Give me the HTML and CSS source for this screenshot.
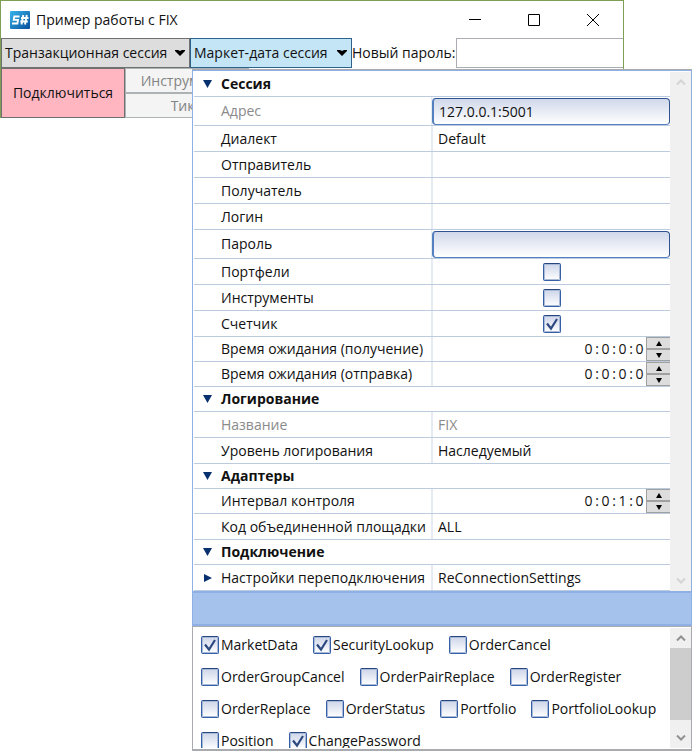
FILE: index.html
```html
<!DOCTYPE html>
<html lang="ru">
<head>
<meta charset="utf-8">
<title>Пример работы с FIX</title>
<link rel="stylesheet" href="styles.css">
</head>
<body>
<main class="window">
  <header class="titlebar">
    <svg class="logo" viewBox="0 0 20 18" aria-hidden="true">
      <defs><linearGradient id="lg" x1="0" y1="0" x2="1" y2="1"><stop offset="0" stop-color="#35b4ea"/><stop offset="1" stop-color="#0a4f9c"/></linearGradient></defs>
      <rect width="20" height="18" rx="1" fill="url(#lg)"/>
      <path d="M9.500 5.500H4.300L3.700 8.900H8L7.400 12.500H2M13.300 4L11.500 13.500M16.800 4L15 13.500M11 7H18.500M10.300 10.500H17.800" fill="none" stroke="#fff" stroke-width="1.900"/>
    </svg>
    <h1 class="title">Пример работы с FIX</h1>
    <div class="caption">
      <button class="cap" aria-label="Свернуть"><svg viewBox="0 0 12 12"><path d="M0 5.500H12"/></svg></button>
      <button class="cap" aria-label="Развернуть"><svg viewBox="0 0 12 12"><path d="M.5.500H11.500V11.500H.500Z"/></svg></button>
      <button class="cap" aria-label="Закрыть"><svg viewBox="0 0 12 12"><path d="M0 0L12 12M12 0L0 12"/></svg></button>
    </div>
  </header>
  <div class="toolbar">
    <button class="drop">Транзакционная сессия<svg class="chev" viewBox="0 0 10 6"><path d="M0 0H3L5 1L7 0H10V1L5 6L0 1Z"/></svg></button>
    <button class="drop drop-open" aria-expanded="true">Маркет-дата сессия<svg class="chev" viewBox="0 0 10 6"><path d="M0 0H3L5 1L7 0H10V1L5 6L0 1Z"/></svg></button>
    <label for="newpass">Новый пароль:</label>
    <input class="newpass" id="newpass" type="password">
  </div>
  <div class="actions">
    <button class="connect">Подключиться</button>
    <div class="stack">
      <button class="off" disabled>Инструменты</button>
      <button class="off" disabled>Тики</button>
    </div>
  </div>
</main>

<section class="popup" aria-label="Маркет-дата сессия">
  <div class="props">
    <div class="grid">
      <button class="group"><svg class="tri" viewBox="0 0 9 8"><path d="M0 0H9L4.500 8Z"/></svg>Сессия</button>
      <div class="row row-box"><label class="name muted" for="addr">Адрес</label><div class="value"><input class="box" id="addr" value="127.0.0.1:5001"></div></div>
      <div class="row"><label class="name" for="dialect">Диалект</label><div class="value"><select class="pick" id="dialect"><option>Default</option></select></div></div>
      <div class="row"><label class="name" for="sender">Отправитель</label><div class="value"><input class="plain" id="sender"></div></div>
      <div class="row"><label class="name" for="target">Получатель</label><div class="value"><input class="plain" id="target"></div></div>
      <div class="row"><label class="name" for="login">Логин</label><div class="value"><input class="plain" id="login"></div></div>
      <div class="row row-box"><label class="name" for="pass">Пароль</label><div class="value"><input class="box" id="pass" type="password"></div></div>
      <div class="row"><label class="name" for="portf">Портфели</label><div class="value center"><input class="check" id="portf" type="checkbox"></div></div>
      <div class="row"><label class="name" for="instr">Инструменты</label><div class="value center"><input class="check" id="instr" type="checkbox"></div></div>
      <div class="row"><label class="name" for="counter">Счетчик</label><div class="value center"><input class="check" id="counter" type="checkbox" checked></div></div>
      <div class="row row-short"><label class="name" for="recv">Время ожидания (получение)</label><div class="value time"><input class="digit" id="recv" value="0"><span class="colon">:</span><input class="digit" aria-label="часы" value="0"><span class="colon">:</span><input class="digit" aria-label="минуты" value="0"><span class="colon">:</span><input class="digit" aria-label="секунды" value="0"><div class="spin"><button aria-label="Больше"><svg viewBox="0 0 6 5"><path d="M0 5H6L3 0Z"/></svg></button><button aria-label="Меньше"><svg viewBox="0 0 6 5"><path d="M0 0H6L3 5Z"/></svg></button></div></div></div>
      <div class="row row-short"><label class="name" for="send">Время ожидания (отправка)</label><div class="value time"><input class="digit" id="send" value="0"><span class="colon">:</span><input class="digit" aria-label="часы" value="0"><span class="colon">:</span><input class="digit" aria-label="минуты" value="0"><span class="colon">:</span><input class="digit" aria-label="секунды" value="0"><div class="spin"><button aria-label="Больше"><svg viewBox="0 0 6 5"><path d="M0 5H6L3 0Z"/></svg></button><button aria-label="Меньше"><svg viewBox="0 0 6 5"><path d="M0 0H6L3 5Z"/></svg></button></div></div></div>
      <button class="group"><svg class="tri" viewBox="0 0 9 8"><path d="M0 0H9L4.500 8Z"/></svg>Логирование</button>
      <div class="row"><label class="name muted" for="title">Название</label><div class="value"><input class="plain muted" id="title" value="FIX" readonly></div></div>
      <div class="row"><label class="name" for="level">Уровень логирования</label><div class="value"><select class="pick" id="level"><option>Наследуемый</option></select></div></div>
      <button class="group"><svg class="tri" viewBox="0 0 9 8"><path d="M0 0H9L4.500 8Z"/></svg>Адаптеры</button>
      <div class="row row-short"><label class="name" for="interval">Интервал контроля</label><div class="value time"><input class="digit" id="interval" value="0"><span class="colon">:</span><input class="digit" aria-label="часы" value="0"><span class="colon">:</span><input class="digit" aria-label="минуты" value="1"><span class="colon">:</span><input class="digit" aria-label="секунды" value="0"><div class="spin"><button aria-label="Больше"><svg viewBox="0 0 6 5"><path d="M0 5H6L3 0Z"/></svg></button><button aria-label="Меньше"><svg viewBox="0 0 6 5"><path d="M0 0H6L3 5Z"/></svg></button></div></div></div>
      <div class="row"><label class="name" for="board">Код объединенной площадки</label><div class="value"><input class="plain" id="board" value="ALL"></div></div>
      <button class="group"><svg class="tri" viewBox="0 0 9 8"><path d="M0 0H9L4.500 8Z"/></svg>Подключение</button>
      <div class="row"><label class="name name-tree" for="reconn"><svg class="tri" viewBox="0 0 9 8"><path d="M1 0V8L9 4Z"/></svg>Настройки переподключения</label><div class="value"><input class="plain" id="reconn" value="ReConnectionSettings" readonly></div></div>
    </div>
    <div class="scroll scroll-off">
      <button aria-label="Вверх" disabled><svg viewBox="0 0 10 6"><path d="M1 5.500L5 1.500L9 5.500"/></svg></button>
      <button aria-label="Вниз" disabled><svg viewBox="0 0 10 6"><path d="M1 .5L5 4.500L9 .5"/></svg></button>
    </div>
  </div>
  <div class="band"></div>
  <div class="messages">
    <div class="choices">
      <label class="choice"><input class="check" type="checkbox" checked>MarketData</label>
      <label class="choice"><input class="check" type="checkbox" checked>SecurityLookup</label>
      <label class="choice"><input class="check" type="checkbox">OrderCancel</label>
      <label class="choice"><input class="check" type="checkbox">OrderGroupCancel</label>
      <label class="choice"><input class="check" type="checkbox">OrderPairReplace</label>
      <label class="choice"><input class="check" type="checkbox">OrderRegister</label>
      <label class="choice"><input class="check" type="checkbox">OrderReplace</label>
      <label class="choice"><input class="check" type="checkbox">OrderStatus</label>
      <label class="choice"><input class="check" type="checkbox">Portfolio</label>
      <label class="choice"><input class="check" type="checkbox">PortfolioLookup</label>
      <label class="choice"><input class="check" type="checkbox">Position</label>
      <label class="choice"><input class="check" type="checkbox" checked>ChangePassword</label>
    </div>
    <div class="scroll">
      <button aria-label="Вверх"><svg viewBox="0 0 10 6"><path d="M1 5.500L5 1.500L9 5.500"/></svg></button>
      <div class="thumb"></div>
      <button aria-label="Вниз"><svg viewBox="0 0 10 6"><path d="M1 .5L5 4.500L9 .5"/></svg></button>
    </div>
  </div>
</section>
</body>
</html>
```
FILE: styles.css
```css
* { box-sizing: border-box; }

body {
  margin: 0;
  background: #fff;
  color: #111;
  font-family: "Open Sans", "Noto Sans", sans-serif;
  font-size: 14px;
  line-height: 20px;
}

button, input, select {
  margin: 0;
  padding: 0;
  font: inherit;
  color: inherit;
  border-radius: 0;
  outline: none;
}

svg { display: block; flex: none; }

/* Main window */
.window {
  width: 90%;
  border: 1px solid #7f9f55;
  border-bottom: 0;
}

.titlebar {
  display: flex;
  align-items: center;
  height: 37px;
  padding-left: 9px;
}
.logo { width: 20px; height: 18px; }
.title { margin: 0 0 0 6px; font-size: 14px; font-weight: 400; white-space: nowrap; }
.caption { display: flex; margin-left: auto; }
.cap {
  display: flex;
  align-items: center;
  justify-content: center;
  width: 59px;
  height: 36px;
  border: 0;
  background: none;
}
.cap svg { width: 12px; height: 12px; fill: none; stroke: #000; }

.toolbar { display: flex; align-items: center; height: 30px; white-space: nowrap; }
.drop {
  display: flex;
  flex: none;
  align-items: center;
  justify-content: space-between;
  width: 189px;
  height: 30px;
  padding: 0 4px 0 3px;
  border: 1px solid #707070;
  background: #ddd;
}
.drop-open { width: 162px; border-color: #2c628b; background: #c4e5f6; }
.chev { width: 10px; height: 6px; }
.newpass {
  flex: 1;
  min-width: 0;
  height: 30px;
  border: 1px solid #abadb3;
  border-right: 0;
}
.toolbar label { flex: none; width: 104px; }

.actions { display: flex; }
.connect {
  width: 124px;
  height: 50px;
  border: 1px solid #707070;
  background: #ffb6c1;
}
.stack { display: flex; flex-direction: column; width: 124px; }
.off {
  height: 25px;
  border: 1px solid #adb2b5;
  background: #f4f4f4;
  color: #838383;
}

/* Drop-down panel that lies over the window */
.popup {
  position: absolute;
  top: 69px;
  left: 192px;
  right: 1px;
  border-top: 1px solid #a9abb0;
  background: #fff;
}
.props {
  display: flex;
  padding: 1px 0 0 1px;
  border: 1px solid #8fb0e4;
  border-bottom: 0;
}
.grid { flex: 1; min-width: 0; }

.group {
  display: flex;
  align-items: center;
  gap: 9px;
  width: 100%;
  height: 25px;
  padding: 0 0 0 9px;
  border: 0;
  border-bottom: 1px solid #bccbdd;
  background: none;
  font-weight: 700;
}
.tri { width: 9px; height: 8px; fill: #08306e; }

.row { display: flex; height: 26px; border-bottom: 1px solid #bccbdd; }
.row-short { height: 25px; }
.row-box { height: 29px; }
.name {
  display: flex;
  align-items: center;
  flex: none;
  width: calc(50% - 1px);
  padding-left: 27px;
  white-space: nowrap;
}
.name-tree { gap: 9px; padding-left: 9px; }
.muted { color: #8a8a8a; }
.value {
  display: flex;
  align-items: center;
  flex: 1;
  min-width: 0;
  border-left: 2px solid #e6ebf3;
}
.row-box .value { border-left-width: 1px; }
.center { justify-content: center; }
.plain, .pick {
  width: 100%;
  padding-left: 5px;
  border: 0;
  background: none;
  appearance: none;
}
.box {
  width: 100%;
  height: 27px;
  padding-left: 5px;
  border: 1px solid #2f5391;
  border-left: 2px solid #5580c0;
  border-bottom-color: #5580c0;
  border-radius: 4px;
  background: linear-gradient(#d0d8ea, #fff);
}

.check {
  flex: none;
  width: 18px;
  height: 18px;
  border: 1px solid #3560a5;
  border-top-color: #27457f;
  border-radius: 2px;
  box-shadow: inset 0 0 0 1px #a9b9d8;
  background: linear-gradient(#cdd5e9, #fff);
  appearance: none;
}
.check:checked {
  background: url("data:image/svg+xml,%3Csvg xmlns='http://www.w3.org/2000/svg' viewBox='0 0 16 16'%3E%3Cpath d='M3 7.500L7 12.500L13 3' fill='none' stroke='%232d4a80' stroke-width='2.200'/%3E%3C/svg%3E"), linear-gradient(#cdd5e9, #fff);
}

.time { justify-content: flex-end; }
.digit { width: 9px; border: 0; background: none; text-align: center; }
.colon { width: 8px; text-align: center; }
.spin { display: flex; flex-direction: column; width: 24px; height: 24px; margin-left: 2px; }
.spin button {
  display: flex;
  flex: 1;
  align-items: center;
  justify-content: center;
  border: 1px solid #a0a0a0;
  border-right: 0;
  background: #ddd;
}
.spin svg { width: 6px; height: 5px; }

.scroll {
  display: flex;
  flex: none;
  flex-direction: column;
  width: 21px;
  background: #f0f0f0;
}
.scroll button {
  display: flex;
  align-items: center;
  justify-content: center;
  height: 20px;
  border: 0;
  background: none;
}
.scroll svg { width: 10px; height: 6px; fill: none; stroke: #909090; stroke-width: 2; }
.scroll-off { justify-content: space-between; }
.scroll-off svg { stroke: #d4d4d4; }

.band {
  height: 35px;
  border: 1px solid #8fb0e4;
  border-width: 2px 1px;
  background: #a4c2ec;
}

.messages {
  display: flex;
  height: 125px;
  padding: 1px 0;
  border: 1px solid #a9abb0;
  border-bottom-width: 2px;
}
.choices {
  display: flex;
  flex: 1;
  flex-wrap: wrap;
  align-content: flex-start;
  gap: 14px 15px;
  min-width: 0;
  padding: 8px 0 0 8px;
  overflow: hidden;
}
.choice {
  display: flex;
  align-items: center;
  gap: 2px;
  height: 18px;
  white-space: nowrap;
}
.thumb { height: 72px; margin-bottom: auto; background: #cdcdcd; }
```
